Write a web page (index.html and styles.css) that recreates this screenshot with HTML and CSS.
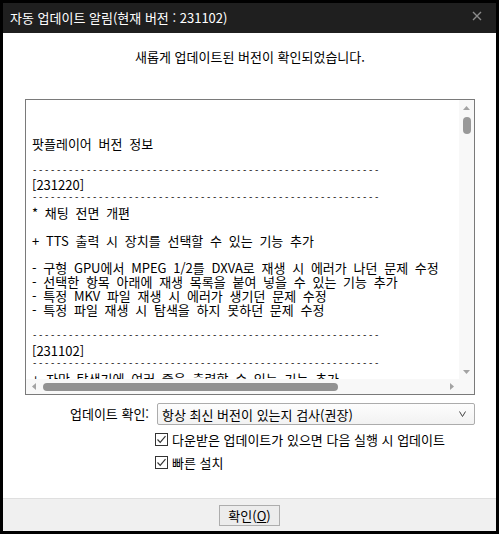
FILE: index.html
```html
<!DOCTYPE html>
<html lang="ko">
<head>
  <meta charset="utf-8">
  <title>자동 업데이트 알림</title>
  <link rel="stylesheet" href="styles.css">
</head>
<body>
  <div class="window">
    <div class="titlebar">
      <span class="title">자동 업데이트 알림(현재 버전 : 231102)</span>
      <svg class="close" width="10" height="10" viewBox="0 0 10 10"><path d="M1 1L9 9M9 1L1 9"/></svg>
    </div>

    <div class="content">
      <p class="message">새롭게 업데이트된 버전이 확인되었습니다.</p>

      <div class="notes-box">
        <div class="notes">
          <p>팟플레이어 버전 정보</p>
          <p class="rule gap">----------------------------------------------------------</p>
          <p>[231220]</p>
          <p class="rule">----------------------------------------------------------</p>
          <p>* 채팅 전면 개편</p>
          <p class="gap">+ TTS 출력 시 장치를 선택할 수 있는 기능 추가</p>
          <p class="gap">- 구형 GPU에서 MPEG 1/2를 DXVA로 재생 시 에러가 나던 문제 수정</p>
          <p>- 선택한 항목 아래에 재생 목록을 붙여 넣을 수 있는 기능 추가</p>
          <p>- 특정 MKV 파일 재생 시 에러가 생기던 문제 수정</p>
          <p>- 특정 파일 재생 시 탐색을 하지 못하던 문제 수정</p>
          <p class="rule gap">----------------------------------------------------------</p>
          <p>[231102]</p>
          <p class="rule">----------------------------------------------------------</p>
          <p>+ 자막 탐색기에 여러 줄을 출력할 수 있는 기능 추가</p>
        </div>
        <div class="vbar">
          <span class="sb-btn"><svg width="7" height="4" viewBox="0 0 7 4"><polygon points="3.5,0 7,4 0,4"/></svg></span>
          <span class="vthumb"></span>
          <span class="sb-fill"></span>
          <span class="sb-btn"><svg width="7" height="4" viewBox="0 0 7 4"><polygon points="0,0 7,0 3.5,4"/></svg></span>
        </div>
        <div class="hbar">
          <span class="sb-btn"><svg width="4" height="7" viewBox="0 0 4 7"><polygon points="4,0 4,7 0,3.5"/></svg></span>
          <span class="hthumb"></span>
          <span class="sb-fill"></span>
          <span class="sb-btn"><svg width="4" height="7" viewBox="0 0 4 7"><polygon points="0,0 4,3.5 0,7"/></svg></span>
        </div>
        <div class="corner"></div>
      </div>

      <div class="options">
        <span class="option-label">업데이트 확인:</span>
        <div class="select">
          <span>항상 최신 버전이 있는지 검사(권장)</span>
          <svg width="7" height="6" viewBox="0 0 7 6"><path d="M0.5 0.5L3.5 5.5L6.5 0.5"/></svg>
        </div>
        <label class="check">
          <span class="box"><svg width="11" height="11" viewBox="0 0 11 11"><path d="M1.5 5.5L4.2 8.3L9.5 2.2"/></svg></span>
          다운받은 업데이트가 있으면 다음 실행 시 업데이트
        </label>
        <label class="check">
          <span class="box"><svg width="11" height="11" viewBox="0 0 11 11"><path d="M1.5 5.5L4.2 8.3L9.5 2.2"/></svg></span>
          빠른 설치
        </label>
      </div>
    </div>

    <div class="footer">
      <button class="ok">확인(<u>O</u>)</button>
    </div>
  </div>
</body>
</html>
```

FILE: styles.css
```css
* {
  box-sizing: border-box;
}
html, body {
  margin: 0;
  height: 100%;
}
body {
  background: #000;
  font-family: "Noto Sans CJK KR", sans-serif;
  font-size: 13px;
  color: #000;
}
.window {
  margin: 3px;
  height: 528px;
  display: flex;
  flex-direction: column;
  background: #fff;
}
.titlebar {
  height: 30px;
  flex-shrink: 0;
  background: #1f1f1f;
  color: #fff;
  display: flex;
  align-items: center;
  justify-content: space-between;
  padding: 0 14px 1px 7px;
}
.title {
  font-size: 13px;
  line-height: 16px;
}
.close {
  fill: none;
  stroke: #8c8c8c;
  stroke-width: 1.4;
  margin-bottom: 3px;
}
.content {
  flex: 1;
  padding: 16px 21px 0 22px;
}
.message {
  margin: 0;
  text-align: center;
  line-height: 16px;
}
.notes-box {
  margin-top: 34px;
  height: 296px;
  border: 1px solid #7a7a7a;
  display: grid;
  grid-template-columns: minmax(0, 1fr) 15px;
  grid-template-rows: minmax(0, 1fr) 15px;
}
.notes {
  min-width: 0;
  overflow: hidden;
  padding: 37px 0 0 6px;
  line-height: 13.8px;
  word-spacing: 3.1px;
}
.notes p {
  margin: 0;
  white-space: pre;
}
/* an empty line of the original text */
.notes .gap {
  margin-top: 13.8px;
}
/* separator lines use a fixed half-width cell */
.notes .rule {
  font-family: "Liberation Mono", monospace;
  font-size: 9px;
  letter-spacing: 0.6px;
  word-spacing: 0;
}
.vbar, .hbar, .corner {
  background: #f8f8f8;
}
.vbar {
  display: flex;
  flex-direction: column;
  align-items: center;
}
.hbar {
  display: flex;
  align-items: center;
}
.sb-btn {
  width: 15px;
  height: 15px;
  flex-shrink: 0;
  display: flex;
  align-items: center;
  justify-content: center;
}
.sb-btn svg {
  fill: #a3a3a3;
}
.sb-fill {
  flex: 1;
}
.vthumb {
  width: 8px;
  height: 17px;
  margin-top: 2px;
  border-radius: 4px;
  background: #999;
}
.hthumb {
  width: 295px;
  height: 8px;
  margin-left: 2px;
  border-radius: 4px;
  background: #929292;
}
.options {
  display: grid;
  grid-template-columns: 1fr 318px;
  column-gap: 8px;
  row-gap: 5px;
  margin-top: 8px;
}
.option-label {
  justify-self: end;
  align-self: center;
  line-height: 16px;
}
.select {
  height: 22px;
  border: 1px solid #acacac;
  border-radius: 2px;
  background: linear-gradient(#fdfdfd, #f2f2f2);
  display: flex;
  align-items: center;
  justify-content: space-between;
  padding: 0 8px 0 4px;
}
.select svg {
  fill: none;
  stroke: #444;
  stroke-width: 1;
}
.check {
  grid-column: 2;
  display: flex;
  align-items: center;
  gap: 4px;
  height: 18px;
  margin-left: -2px;
}
.box {
  width: 13px;
  height: 13px;
  border: 1px solid #333;
  background: #fff;
  display: flex;
  align-items: center;
  justify-content: center;
}
.box svg {
  fill: none;
  stroke: #333;
  stroke-width: 1.2;
}
.footer {
  height: 33px;
  flex-shrink: 0;
  border-top: 1px solid #dfdfdf;
  background: #f0f0f0;
  display: flex;
  justify-content: center;
  padding-top: 6px;
}
.ok {
  width: 61px;
  height: 21px;
  padding: 0;
  border: 1px solid #adadad;
  background: #ececec;
  font-family: inherit;
  font-size: 13px;
  line-height: 17px;
  color: #000;
}
```
